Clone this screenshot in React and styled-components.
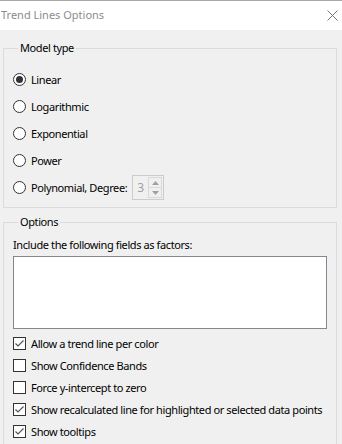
import React from "react";
import styled, { createGlobalStyle } from "styled-components";

const Global = createGlobalStyle`
  html, body { margin: 0; padding: 0; background: #f0f0f0; }
  body {
    font-family: "Noto Sans", "Open Sans", sans-serif;
    font-size: 11px;
    letter-spacing: -0.4px;
    color: #000;
  }
`;

const Window = styled.div`
  width: 342px;
  height: 444px;
  overflow: hidden;
  background: #f0f0f0;
  display: flex;
  flex-direction: column;
`;

const TitleBar = styled.div`
  height: 29px;
  border-top: 1px solid #a8a8a8;
  background: #fff;
  display: flex;
  align-items: center;
  justify-content: space-between;
  padding: 0 4px 0 1px;
  flex-shrink: 0;
`;

const Title = styled.div`
  color: #8c8c8c;
  font-size: 11px;
  letter-spacing: 0;
  margin-top: -2px;
`;

const Body = styled.div`
  padding: 10px 5px 0 3px;
  display: flex;
  flex-direction: column;
  gap: 6px;
`;

const Group = styled.fieldset`
  margin: 0;
  border: 1px solid #dcdcdc;
  padding: ${(p) => p.$pad};
  min-width: 0;
`;

const Legend = styled.legend`
  padding: 0 2px;
  margin-left: 5px;
  line-height: 16px;
  height: 16px;
`;

const Row = styled.label`
  display: flex;
  align-items: center;
  height: ${(p) => p.$h}px;
  gap: 5px;
  white-space: nowrap;
`;

const Radio = styled.span`
  width: 13px;
  height: 13px;
  box-sizing: border-box;
  border: 1px solid #333;
  border-radius: 50%;
  background: #fff;
  display: flex;
  align-items: center;
  justify-content: center;
  flex-shrink: 0;
  &::after {
    content: "";
    display: ${(p) => (p.$on ? "block" : "none")};
    width: 7px;
    height: 7px;
    border-radius: 50%;
    background: #333;
  }
`;

const Box = styled.span`
  width: 13px;
  height: 13px;
  box-sizing: border-box;
  border: 1px solid #333;
  background: #fff;
  display: flex;
  align-items: center;
  justify-content: center;
  flex-shrink: 0;
`;

const Spin = styled.div`
  display: flex;
  width: 32px;
  height: 25px;
  box-sizing: border-box;
  border: 1px solid #cccccc;
  background: #f0f0f0;
  padding: 1px;
`;

const SpinValue = styled.div`
  flex: 1;
  color: #a0a0a0;
  font-size: 12px;
  padding-left: 3px;
  line-height: 21px;
`;

const SpinButtons = styled.div`
  display: flex;
  flex-direction: column;
  width: 14px;
`;

const SpinBtn = styled.div`
  flex: 1;
  border: 1px solid #d9d9d9;
  ${(p) => (p.$down ? "border-top: none;" : "")}
  display: flex;
  align-items: center;
  justify-content: center;
`;

const Caption = styled.div`
  line-height: 16px;
  margin-bottom: 3px;
`;

const ListBox = styled.div`
  height: 73px;
  box-sizing: border-box;
  border: 1px solid #828790;
  background: #fff;
  margin-bottom: 3px;
`;

const Check = () => (
  <svg width="11" height="11" viewBox="0 0 11 11">
    <path d="M1.5 5.5 L4 8 L9.5 2.5" fill="none" stroke="#555" strokeWidth="1.2" />
  </svg>
);

const Arrow = ({ up }) => (
  <svg width="7" height="4" viewBox="0 0 7 4">
    <path d={up ? "M0 4 L3.5 0 L7 4 Z" : "M0 0 L3.5 4 L7 0 Z"} fill="#a0a0a0" />
  </svg>
);

const radios = ["Linear", "Logarithmic", "Exponential", "Power"];
const checks = [
  ["Allow a trend line per color", true],
  ["Show Confidence Bands", false],
  ["Force y-intercept to zero", false],
  ["Show recalculated line for highlighted or selected data points", true],
  ["Show tooltips", true],
];

export default function App() {
  return (
    <>
      <Global />
      <Window>
        <TitleBar>
          <Title>Trend Lines Options</Title>
          <svg width="11" height="11" viewBox="0 0 11 11">
            <path d="M0.5 0.5 L10.5 10.5 M10.5 0.5 L0.5 10.5" stroke="#777" strokeWidth="1" />
          </svg>
        </TitleBar>
        <Body>
          <Group $pad="10px 9px 6px 9px">
            <Legend>Model type</Legend>
            {radios.map((r, i) => (
              <Row key={r} $h={27}>
                <Radio $on={i === 0} />
                {r}
              </Row>
            ))}
            <Row $h={27}>
              <Radio />
              Polynomial, Degree:
              <Spin>
                <SpinValue>3</SpinValue>
                <SpinButtons>
                  <SpinBtn>
                    <Arrow up />
                  </SpinBtn>
                  <SpinBtn $down>
                    <Arrow />
                  </SpinBtn>
                </SpinButtons>
              </Spin>
            </Row>
          </Group>
          <Group $pad="7px 9px 10px 9px">
            <Legend>Options</Legend>
            <Caption>Include the following fields as factors:</Caption>
            <ListBox />
            {checks.map(([t, on]) => (
              <Row key={t} $h={22}>
                <Box>{on && <Check />}</Box>
                {t}
              </Row>
            ))}
          </Group>
        </Body>
      </Window>
    </>
  );
}
